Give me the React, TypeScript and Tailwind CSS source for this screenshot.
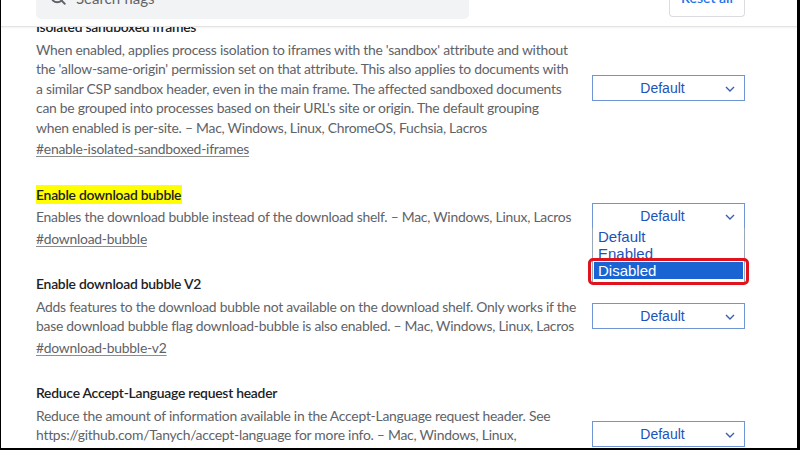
import { Search } from "lucide-react";

type Flag = {
  title: string;
  lines: string[];
  tag?: string;
  highlight?: boolean;
  open?: boolean;
};

const flags: Flag[] = [
  {
    title: "Isolated sandboxed iframes",
    lines: [
      "When enabled, applies process isolation to iframes with the 'sandbox' attribute and without",
      "the 'allow-same-origin' permission set on that attribute. This also applies to documents with",
      "a similar CSP sandbox header, even in the main frame. The affected sandboxed documents",
      "can be grouped into processes based on their URL's site or origin. The default grouping",
      "when enabled is per-site. – Mac, Windows, Linux, ChromeOS, Fuchsia, Lacros",
    ],
    tag: "#enable-isolated-sandboxed-iframes",
  },
  {
    title: "Enable download bubble",
    lines: ["Enables the download bubble instead of the download shelf. – Mac, Windows, Linux, Lacros"],
    tag: "#download-bubble",
    highlight: true,
    open: true,
  },
  {
    title: "Enable download bubble V2",
    lines: [
      "Adds features to the download bubble not available on the download shelf. Only works if the",
      "base download bubble flag download-bubble is also enabled. – Mac, Windows, Linux, Lacros",
    ],
    tag: "#download-bubble-v2",
  },
  {
    title: "Reduce Accept-Language request header",
    lines: [
      "Reduce the amount of information available in the Accept-Language request header. See",
      "https://github.com/Tanych/accept-language for more info. – Mac, Windows, Linux,",
      "ChromeOS, Fuchsia, Lacros",
    ],
    tag: "#reduce-accept-language",
  },
];

const Chevron = () => (
  <svg width="10" height="6" viewBox="0 0 10 6" className="absolute right-[9px] top-[10px]">
    <path d="M1 1l4 4 4-4" fill="none" stroke="#3b5fa8" strokeWidth="1.4" />
  </svg>
);

const FlagSelect = ({ open }: { open?: boolean }) => (
  <div className="relative w-[153px] font-['Liberation_Sans',Arial,sans-serif]">
    <div className="relative h-[26px] border border-[#6f95d6] bg-white pr-[12px] text-center text-[14px] leading-[24px] text-[#1d52b8]">
      Default
      <Chevron />
    </div>
    {open && (
      <div className="absolute left-0 top-[25px] z-10 w-full border border-[#9aa7b8] border-t-0 bg-white pb-[3px] pl-[1px] pr-[1px] text-[15px] leading-[17px] text-[#1d52b8]">
        <div className="pl-[4px]">Default</div>
        <div className="pl-[4px]">Enabled</div>
        <div className="relative bg-[#1a63d3] pl-[4px] text-white">
          Disabled
          <div className="absolute -left-[6px] -right-[6px] -top-[4px] -bottom-[6px] rounded-[5px] border-[3px] border-[#e0121b]" />
        </div>
      </div>
    )}
  </div>
);

export default function App() {
  return (
    <div className="relative h-[450px] w-[800px] overflow-hidden border-b-2 border-l border-r-[3px] border-black bg-white font-['Lato','Noto_Sans',sans-serif]">
      {/* sticky header, scrolled so only its lower edge shows */}
      <header className="relative z-20 flex h-[27px] items-start justify-between border-b border-[#e4e4e4] bg-white pl-[35px] pr-[52px] shadow-[0_1px_2px_rgba(0,0,0,0.06)]">
        <div className="flex h-[19px] w-[433px] items-start gap-[9px] overflow-hidden rounded-b-[5px] bg-[#f1f3f4] pl-[13px] text-[15px] text-[#5f6368]">
          <Search size={18} strokeWidth={2.4} className="-mt-[12px] shrink-0 text-[#5f6368]" />
          <span className="-mt-[10px] leading-[16px]">Search flags</span>
        </div>
        <div className="h-[17px] w-[76px] overflow-hidden rounded-b-[4px] border border-t-0 border-[#dadce0] bg-white text-center text-[14px] font-semibold text-[#1a73e8]">
          <div className="-mt-[10px] leading-[16px]">Reset all</div>
        </div>
      </header>

      <main className="-mt-[10px] flex flex-col gap-[26px] pl-[35px]">
        {flags.map((f) => (
          <section key={f.title} className="flex items-center gap-[12px]">
            <div className="w-[544px] whitespace-nowrap text-[13.9px] leading-[19.5px] tracking-[-0.25px]">
              <h3 className="font-semibold text-[#202124]">
                <span className={f.highlight ? "bg-[#ffff00] py-[1px] pr-[1px]" : ""}>{f.title}</span>
              </h3>
              <div className="mt-[3px] text-[#5f6368]">
                {f.lines.map((l) => (
                  <p key={l}>{l}</p>
                ))}
              </div>
              {f.tag && (
                <p className="mt-[2px] text-[#5f6368] underline decoration-[#8d8d8d] underline-offset-2">{f.tag}</p>
              )}
            </div>
            <FlagSelect open={f.open} />
          </section>
        ))}
      </main>
    </div>
  );
}
